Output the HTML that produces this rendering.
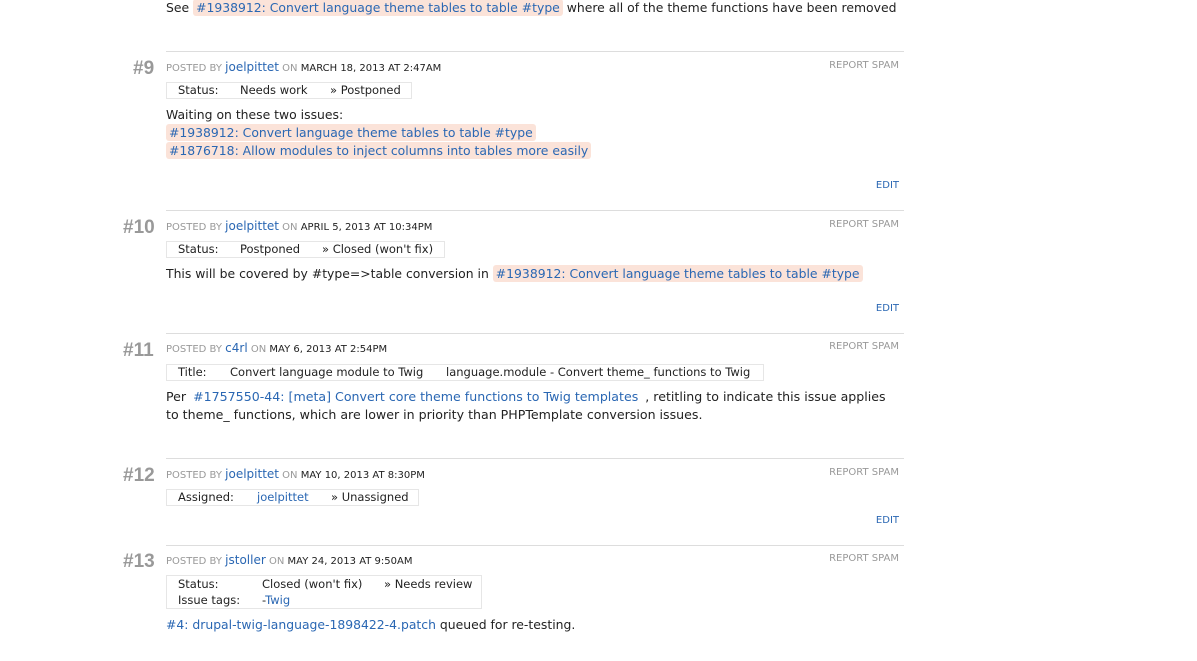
<html><head><style>
body{margin:0;width:1197px;height:661px;background:#fff;font-family:"DejaVu Sans","Liberation Sans",sans-serif;color:#222;position:relative;overflow:hidden}
.a{position:absolute;white-space:nowrap}
.t{font-size:12.4px}
a{color:#2a67b3;text-decoration:none}
.hl{background:#fbe3d9;border-radius:3px;padding:1px 3px}
.hr{position:absolute;left:166px;width:738px;height:1px;background:#ddd}
.num{position:absolute;font-family:"Liberation Sans",sans-serif;font-size:19px;font-weight:bold;color:#999;}
.meta{font-size:10px;color:#999}
.meta b{font-weight:normal;color:#222}
.meta a{font-size:12px}
.rs{font-size:10px;color:#999;right:298px}
.ed{font-size:10px;color:#2a67b3;right:298px}
.box{position:absolute;border:1px solid #e6e6e6;font-size:11.5px;height:15px;line-height:15px}
.box span{position:absolute;white-space:nowrap}
</style></head><body>
<div class="a t" style="left:166px;top:0px">See <span class="hl"><a>#1938912: Convert language theme tables to table #type</a></span> where all of the theme functions have been removed</div>

<div class="hr" style="top:51px"></div>
<div class="num" style="left:133px;top:58px">#9</div>
<div class="a meta" style="left:166px;top:60px">POSTED BY <a>joelpittet</a> ON <b>MARCH 18, 2013 AT 2:47AM</b></div>
<div class="a rs" style="top:60px">REPORT SPAM</div>
<div class="box" style="left:166px;top:82px;width:244px"><span style="left:11px">Status:</span><span style="left:73px">Needs work</span><span style="left:163px">» Postponed</span></div>
<div class="a t" style="left:166px;top:107px">Waiting on these two issues:</div>
<div class="a t" style="left:166px;top:125px"><span class="hl"><a>#1938912: Convert language theme tables to table #type</a></span></div>
<div class="a t" style="left:166px;top:143px"><span class="hl"><a>#1876718: Allow modules to inject columns into tables more easily</a></span></div>
<div class="a ed" style="top:180px">EDIT</div>

<div class="hr" style="top:210px"></div>
<div class="num" style="left:123px;top:217px">#10</div>
<div class="a meta" style="left:166px;top:219px">POSTED BY <a>joelpittet</a> ON <b>APRIL 5, 2013 AT 10:34PM</b></div>
<div class="a rs" style="top:219px">REPORT SPAM</div>
<div class="box" style="left:166px;top:241px;width:277px"><span style="left:11px">Status:</span><span style="left:73px">Postponed</span><span style="left:155px">» Closed (won't fix)</span></div>
<div class="a t" style="left:166px;top:266px">This will be covered by #type=&gt;table conversion in <span class="hl"><a>#1938912: Convert language theme tables to table #type</a></span></div>
<div class="a ed" style="top:303px">EDIT</div>

<div class="hr" style="top:333px"></div>
<div class="num" style="left:123px;top:340px">#11</div>
<div class="a meta" style="left:166px;top:341px">POSTED BY <a>c4rl</a> ON <b>MAY 6, 2013 AT 2:54PM</b></div>
<div class="a rs" style="top:341px">REPORT SPAM</div>
<div class="box" style="left:166px;top:364px;width:596px"><span style="left:11px">Title:</span><span style="left:63px">Convert language module to Twig</span><span style="left:279px">language.module - Convert theme_ functions to Twig</span></div>
<div class="a t" style="left:166px;top:389px;font-size:12.6px">Per <span class="hl" style="background:none"><a>#1757550-44: [meta] Convert core theme functions to Twig templates</a></span> , retitling to indicate this issue applies</div>
<div class="a t" style="left:166px;top:407px;font-size:12.6px">to theme_ functions, which are lower in priority than PHPTemplate conversion issues.</div>

<div class="hr" style="top:458px"></div>
<div class="num" style="left:123px;top:465px">#12</div>
<div class="a meta" style="left:166px;top:467px">POSTED BY <a>joelpittet</a> ON <b>MAY 10, 2013 AT 8:30PM</b></div>
<div class="a rs" style="top:467px">REPORT SPAM</div>
<div class="box" style="left:166px;top:489px;width:251px"><span style="left:11px">Assigned:</span><span style="left:90px"><a>joelpittet</a></span><span style="left:164px">» Unassigned</span></div>
<div class="a ed" style="top:515px">EDIT</div>

<div class="hr" style="top:545px"></div>
<div class="num" style="left:123px;top:551px">#13</div>
<div class="a meta" style="left:166px;top:553px">POSTED BY <a>jstoller</a> ON <b>MAY 24, 2013 AT 9:50AM</b></div>
<div class="a rs" style="top:553px">REPORT SPAM</div>
<div class="box" style="left:166px;top:575px;width:314px;height:32px"><span style="left:11px;top:1px">Status:</span><span style="left:95px;top:1px">Closed (won't fix)</span><span style="left:217px;top:1px">» Needs review</span><span style="left:11px;top:17px">Issue tags:</span><span style="left:95px;top:17px">-<a>Twig</a></span></div>
<div class="a t" style="left:166px;top:617px"><a>#4: drupal-twig-language-1898422-4.patch</a> queued for re-testing.</div>
</body></html>
